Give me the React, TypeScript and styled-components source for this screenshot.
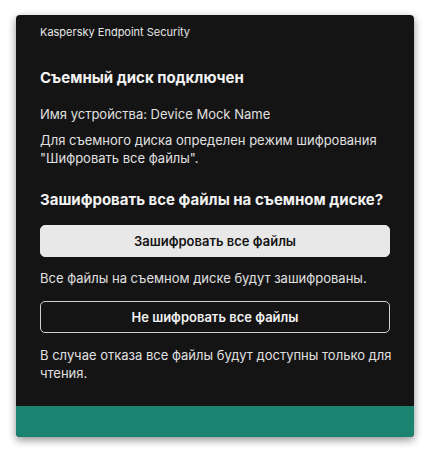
import React from 'react';
import styled, { createGlobalStyle } from 'styled-components';

const GlobalStyle = createGlobalStyle`
  body {
    margin: 0;
    background: #ffffff;
    font-family: Inter, 'Noto Sans', sans-serif;
  }
`;

const Page = styled.div`
  width: 430px;
  height: 454px;
  padding: 15px 16px 0;
  box-sizing: border-box;
`;

const Card = styled.div`
  width: 398px;
  height: 422px;
  display: flex;
  flex-direction: column;
  background: #141414;
  border-radius: 4px;
  overflow: hidden;
  box-shadow: 0 3px 8px rgba(0, 0, 0, 0.45);
`;

const Body = styled.div`
  flex: 1;
  padding: 9px 16px 0 24px;
  display: flex;
  flex-direction: column;
`;

const AppName = styled.div`
  font-size: 11px;
  line-height: 16px;
  color: #e6e6e6;
`;

const Heading = styled.h2<{ $gap: number }>`
  margin: ${({ $gap }) => $gap}px 0 0;
  font-size: 15px;
  line-height: 20px;
  font-weight: 700;
  color: #f2f2f2;
`;

const Text = styled.p<{ $gap: number }>`
  margin: ${({ $gap }) => $gap}px 0 0;
  font-size: 13px;
  line-height: 18px;
  color: #e0e0e0;
`;

const Button = styled.button<{ $primary?: boolean; $gap: number }>`
  margin-top: ${({ $gap }) => $gap}px;
  height: 32px;
  width: 350px;
  border-radius: 5px;
  font-family: inherit;
  font-size: 13px;
  font-weight: 600;
  cursor: pointer;
  background: ${({ $primary }) => ($primary ? '#e8e8e8' : 'transparent')};
  color: ${({ $primary }) => ($primary ? '#141414' : '#f2f2f2')};
  border: 1px solid ${({ $primary }) => ($primary ? '#e8e8e8' : '#d0d0d0')};
`;

const Footer = styled.div`
  height: 31px;
  background: #1b8470;
`;

export default function App() {
  return (
    <>
      <GlobalStyle />
      <Page>
        <Card>
          <Body>
            <AppName>Kaspersky Endpoint Security</AppName>
            <Heading $gap={28}>Съемный диск подключен</Heading>
            <Text $gap={17}>Имя устройства: Device Mock Name</Text>
            <Text $gap={8}>
              Для съемного диска определен режим шифрования "Шифровать все файлы".
            </Text>
            <Heading $gap={23}>Зашифровать все файлы на съемном диске?</Heading>
            <Button $primary $gap={15}>Зашифровать все файлы</Button>
            <Text $gap={12}>Все файлы на съемном диске будут зашифрованы.</Text>
            <Button $gap={14}>Не шифровать все файлы</Button>
            <Text $gap={13}>
              В случае отказа все файлы будут доступны только для чтения.
            </Text>
          </Body>
          <Footer />
        </Card>
      </Page>
    </>
  );
}
